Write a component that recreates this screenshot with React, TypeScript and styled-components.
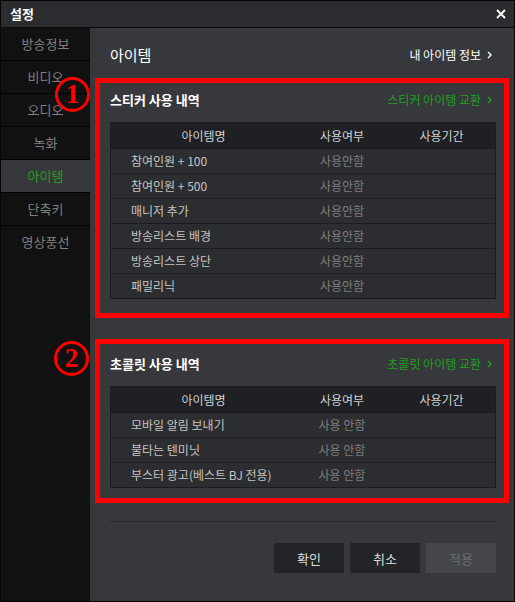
import React from "react"
import styled, { createGlobalStyle } from "styled-components"

const font = `"Noto Sans CJK KR", "Noto Sans", sans-serif`

const GlobalStyle = createGlobalStyle`
  html, body {
    margin: 0;
    padding: 0;
    background: #000;
  }
  * {
    box-sizing: border-box;
  }
`

const Window = styled.div`
  width: 515px;
  height: 602px;
  border: 1px solid #050505;
  display: flex;
  flex-direction: column;
  font-family: ${font};
  background: #37383c;
  overflow: hidden;
`

const TitleBar = styled.div`
  height: 27px;
  border-bottom: 1px solid #0b0b0c;
  background: #2a2c2f;
  display: flex;
  align-items: center;
  justify-content: space-between;
  padding: 0 8px 0 9px;
`

const Title = styled.span`
  color: #fff;
  font-size: 13px;
  font-weight: 700;
  line-height: 16px;
`

const CloseButton = styled.button`
  border: 0;
  background: none;
  padding: 0;
  width: 10px;
  height: 10px;
  display: flex;
  align-items: center;
  justify-content: center;
  cursor: pointer;
`

const Body = styled.div`
  flex: 1;
  display: flex;
  min-height: 0;
`

const Sidebar = styled.nav`
  width: 89px;
  background: #111111;
  display: flex;
  flex-direction: column;
`

const NavItem = styled.div<{ $active?: boolean }>`
  height: 33px;
  border-bottom: 1px solid #000;
  background: ${(p) => (p.$active ? "#37383c" : "transparent")};
  color: ${(p) => (p.$active ? "#1f9f1f" : "#808080")};
  font-size: 13px;
  line-height: 32px;
  text-align: center;

  &:last-child {
    border-bottom: 0;
  }
`

const Content = styled.main`
  flex: 1;
  background: #37383c;
  padding: 17px 18px 0 20px;
  display: flex;
  flex-direction: column;
`

const HeadRow = styled.div`
  height: 20px;
  display: flex;
  align-items: center;
  justify-content: space-between;
`

const PageTitle = styled.h2`
  margin: 0;
  color: #fff;
  font-size: 15px;
  font-weight: 400;
  line-height: 20px;
`

const LinkText = styled.a<{ $green?: boolean }>`
  display: flex;
  align-items: center;
  gap: 6px;
  color: ${(p) => (p.$green ? "#1fa01f" : "#ffffff")};
  font-size: 12px;
  line-height: 16px;
  padding-right: 4px;
  text-decoration: none;
  cursor: pointer;
`

const Highlight = styled.section<{ $top: number; $bottom: number; $gap: number }>`
  position: relative;
  margin: ${(p) => p.$gap}px -13px 0 -15px;
  border: 5px solid #ff0000;
  padding: ${(p) => p.$top}px 8px ${(p) => p.$bottom}px 10px;
`

const Badge = styled.span<{ $left: number; $top: number }>`
  position: absolute;
  left: ${(p) => p.$left}px;
  top: ${(p) => p.$top}px;
  width: 35px;
  height: 35px;
  border: 3px solid #ff0000;
  border-radius: 50%;
  display: flex;
  align-items: center;
  justify-content: center;
  color: #ff0000;
  font-family: "Liberation Serif", serif;
  font-weight: 700;
  font-size: 27px;
  line-height: 1;
`

const SectionHead = styled.div`
  height: 22px;
  margin-bottom: 11px;
  display: flex;
  align-items: center;
  justify-content: space-between;
`

const SectionTitle = styled.h3`
  margin: 0;
  color: #fff;
  font-size: 13px;
  font-weight: 700;
  line-height: 18px;
`

const Table = styled.div`
  border: 1px solid #1b1c1f;
  background: #2c2d31;
`

const Row = styled.div<{ $header?: boolean }>`
  display: grid;
  grid-template-columns: 185px 92px 1fr;
  height: 25px;
  background: ${(p) => (p.$header ? "#1f2023" : "#2c2d31")};
  border-top: ${(p) => (p.$header ? "0" : "1px solid #1b1c1f")};
  align-items: center;
  font-size: 12px;
  line-height: 16px;
`

const HeadCell = styled.span`
  color: #d2d2d2;
  text-align: center;
`

const NameCell = styled.span`
  color: #c4c4c4;
  padding-left: 20px;
`

const StateCell = styled.span`
  color: #7e7e7e;
  text-align: center;
`

const Divider = styled.hr`
  margin: 18px 0 0;
  border: 0;
  height: 1px;
  background: #26272a;
`

const Buttons = styled.div`
  margin-top: 21px;
  display: flex;
  justify-content: flex-end;
  gap: 6px;
`

const Button = styled.button<{ $disabled?: boolean }>`
  width: 70px;
  height: 30px;
  border: 0;
  background: ${(p) => (p.$disabled ? "#44464a" : "#232427")};
  color: ${(p) => (p.$disabled ? "#6a6c70" : "#dcdcdc")};
  font-family: ${font};
  font-size: 13px;
  padding: 0;
  cursor: ${(p) => (p.$disabled ? "default" : "pointer")};
`

const Chevron = ({ color }: { color: string }) => (
  <svg width="5" height="8" viewBox="0 0 5 8">
    <polyline points="1,1 4,4 1,7" fill="none" stroke={color} strokeWidth="1.4" />
  </svg>
)

const menu = ["방송정보", "비디오", "오디오", "녹화", "아이템", "단축키", "영상풍선"]

const stickers = [
  "참여인원 + 100",
  "참여인원 + 500",
  "매니저 추가",
  "방송리스트 배경",
  "방송리스트 상단",
  "패밀리닉",
]

const chocolates = ["모바일 알림 보내기", "불타는 텐미닛", "부스터 광고(베스트 BJ 전용)"]

interface HistoryProps {
  title: string
  link: string
  items: string[]
  state: string
}

const History = ({ title, link, items, state }: HistoryProps) => (
  <>
    <SectionHead>
      <SectionTitle>{title}</SectionTitle>
      <LinkText $green>
        {link}
        <Chevron color="#1fa01f" />
      </LinkText>
    </SectionHead>
    <Table>
      <Row $header>
        <HeadCell>아이템명</HeadCell>
        <HeadCell>사용여부</HeadCell>
        <HeadCell>사용기간</HeadCell>
      </Row>
      {items.map((item) => (
        <Row key={item}>
          <NameCell>{item}</NameCell>
          <StateCell>{state}</StateCell>
          <span />
        </Row>
      ))}
    </Table>
  </>
)

export default function App() {
  return (
    <>
      <GlobalStyle />
      <Window>
        <TitleBar>
          <Title>설정</Title>
          <CloseButton aria-label="닫기">
            <svg width="10" height="10" viewBox="0 0 10 10">
              <path d="M1 1L9 9M9 1L1 9" stroke="#fff" strokeWidth="1.8" />
            </svg>
          </CloseButton>
        </TitleBar>
        <Body>
          <Sidebar>
            {menu.map((m) => (
              <NavItem key={m} $active={m === "아이템"}>
                {m}
              </NavItem>
            ))}
          </Sidebar>
          <Content>
            <HeadRow>
              <PageTitle>아이템</PageTitle>
              <LinkText>
                내 아이템 정보
                <Chevron color="#fff" />
              </LinkText>
            </HeadRow>

            <Highlight $gap={13} $top={6} $bottom={14}>
              <Badge $left={-45} $top={-6}>1</Badge>
              <History
                title="스티커 사용 내역"
                link="스티커 아이템 교환"
                items={stickers}
                state="사용안함"
              />
            </Highlight>

            <Highlight $gap={21} $top={9} $bottom={10}>
              <Badge $left={-46} $top={-3}>2</Badge>
              <History
                title="초콜릿 사용 내역"
                link="초콜릿 아이템 교환"
                items={chocolates}
                state="사용 안함"
              />
            </Highlight>

            <Divider />
            <Buttons>
              <Button>확인</Button>
              <Button>취소</Button>
              <Button $disabled>적용</Button>
            </Buttons>
          </Content>
        </Body>
      </Window>
    </>
  )
}
